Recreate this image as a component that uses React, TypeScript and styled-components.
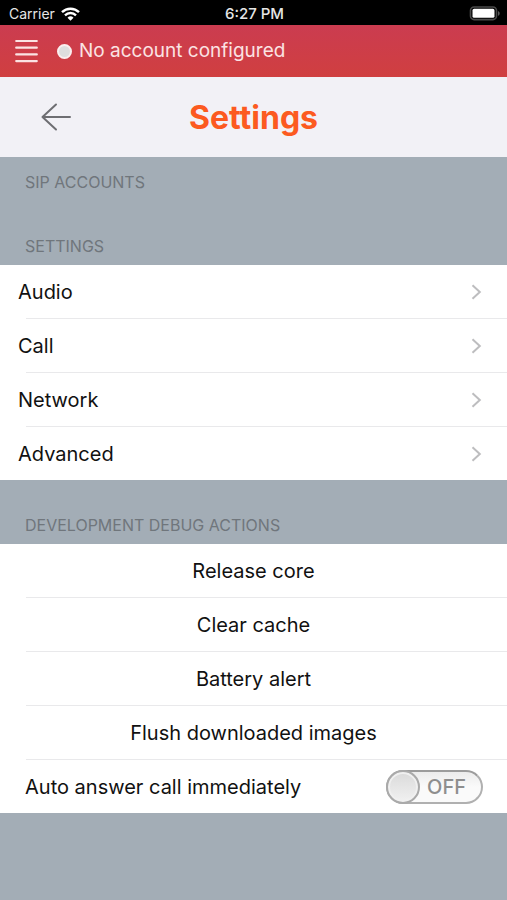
import React, { useState } from "react";
import styled, { createGlobalStyle } from "styled-components";

const GlobalStyle = createGlobalStyle`
  *, *::before, *::after { box-sizing: border-box; }
  body {
    margin: 0;
    background: #a3adb6;
    font-family: Inter, "Liberation Sans", sans-serif;
    color: #111;
  }
  button { font: inherit; color: inherit; border: 0; padding: 0; background: none; cursor: pointer; }
`;

const Screen = styled.div`
  min-height: 100vh;
  background: #a3adb6;
`;

const StatusBar = styled.div`
  display: grid;
  grid-template-columns: 1fr auto 1fr;
  align-items: center;
  height: 25px;
  padding: 2px 7px 0 9px;
  background: #000;
  color: #e6e6e6;
  font-size: 14px;
  line-height: 20px;
`;

const Carrier = styled.span`
  display: flex;
  align-items: center;
  gap: 6px;
`;

const Clock = styled.time`
  font-size: 15px;
  font-weight: 500;
`;

const BatteryIcon = styled.svg`
  justify-self: end;
`;

const AccountBar = styled.header`
  display: flex;
  align-items: center;
  height: 52px;
  padding: 0 15px;
  background: linear-gradient(#cb3c50, #d03f40);
  color: #fbe3e3;
  font-size: 19px;
  line-height: 24px;
`;

const IconButton = styled.button`
  display: flex;
`;

const StatusDot = styled.span`
  width: 15px;
  height: 15px;
  margin: 0 7px 0 19px;
  border: 2px solid #fbeeee;
  border-radius: 50%;
  background: #dedede;
`;

const TitleBar = styled.div`
  display: grid;
  grid-template-columns: 1fr auto 1fr;
  align-items: center;
  height: 80px;
  padding: 0 40px;
  background: #f2f1f6;
`;

const Title = styled.h1`
  margin: 0;
  padding-top: 2px;
  color: #fc5a20;
  font-size: 32px;
  font-weight: 700;
  line-height: 40px;
`;

const SectionTitle = styled.h2<{ $compact?: boolean }>`
  display: flex;
  align-items: flex-end;
  height: ${(p) => (p.$compact ? 44 : 64)}px;
  margin: 0;
  padding: 0 25px 9px;
  color: #70767c;
  font-size: 16px;
  font-weight: 400;
  line-height: 20px;
  text-transform: uppercase;
`;

const List = styled.ul`
  margin: 0;
  padding: 0;
  list-style: none;
  background: #fff;
  font-size: 20px;
  line-height: 24px;
`;

const Item = styled.li`
  & + &::before {
    content: "";
    display: block;
    height: 1px;
    margin-left: 26px;
    background: #e9e9eb;
  }
`;

const LinkRow = styled.button`
  display: flex;
  align-items: center;
  justify-content: space-between;
  width: 100%;
  height: 53px;
  padding: 0 25px 0 18px;
`;

const ActionRow = styled.button`
  display: block;
  width: 100%;
  height: 53px;
  text-align: center;
`;

const SwitchRow = styled.label`
  display: flex;
  align-items: center;
  justify-content: space-between;
  height: 53px;
  padding: 0 24px 0 25px;
`;

const Switch = styled.span<{ $on: boolean }>`
  position: relative;
  display: flex;
  flex-direction: ${(p) => (p.$on ? "row-reverse" : "row")};
  align-items: center;
  width: 97px;
  height: 34px;
  border: 2px solid #b0b0b0;
  border-top-color: #9c9c9c;
  border-radius: 17px;
  background: linear-gradient(#ececec, #fafafa 50%);
  color: #8e8e8e;
`;

const SwitchInput = styled.input`
  position: absolute;
  inset: 0;
  width: 100%;
  height: 100%;
  margin: 0;
  opacity: 0;
  cursor: pointer;
`;

const Knob = styled.span`
  flex: none;
  width: 34px;
  height: 34px;
  margin: 0 -2px;
  border: 2px solid #aaa;
  border-radius: 50%;
  background: linear-gradient(#dadada, #f1f1f1);
  box-shadow: inset 0 0 0 2px #f0f0f0;
`;

const SwitchText = styled.span`
  flex: 1;
  padding-right: 6px;
  text-align: center;
  font-weight: 500;
`;

const Chevron = () => (
  <svg width="11" height="16" viewBox="0 0 11 16" fill="none" stroke="#bdbdbf" strokeWidth="2" aria-hidden="true">
    <path d="M1.5 1.3 8.8 8 1.5 14.7" />
  </svg>
);

const pages = ["Audio", "Call", "Network", "Advanced"];
const actions = ["Release core", "Clear cache", "Battery alert", "Flush downloaded images"];

export default function App() {
  const [autoAnswer, setAutoAnswer] = useState(false);

  return (
    <Screen>
      <GlobalStyle />
      <StatusBar>
        <Carrier>
          Carrier
          <svg width="19" height="14" viewBox="0 0 19 14" fill="none" stroke="#fff" strokeWidth="2.4" aria-label="Wi-Fi">
            <path d="M1 5.2a12.2 12.2 0 0 1 17 0" />
            <path d="M4 8.3a7.9 7.9 0 0 1 11 0" />
            <path d="M9.5 13.8 6.5 10.7a4.3 4.3 0 0 1 6 0Z" fill="#fff" stroke="none" />
          </svg>
        </Carrier>
        <Clock>6:27 PM</Clock>
        <BatteryIcon width="31" height="15" viewBox="0 0 31 15" aria-label="Battery full">
          <rect x="1.500" y="1" width="26" height="12.6" rx="3.6" fill="#000" stroke="#4a4a4a" strokeWidth="1.6" />
          <rect x="3.500" y="2.800" width="22" height="9" rx="1.6" fill="#fff" />
          <path d="M29 5v4.800c1-.4 1.700-1.300 1.700-2.400S30 5.400 29 5Z" fill="#5a5a5a" />
        </BatteryIcon>
      </StatusBar>

      <AccountBar>
        <IconButton aria-label="Menu">
          <svg width="23" height="24" viewBox="0 0 23 24" stroke="#fbe3e3" strokeWidth="2.2" strokeLinecap="round" aria-hidden="true">
            <path d="M1.2 2h20.6M1.2 8.700h20.6M1.2 15.400h20.6M1.2 22.100h20.6" />
          </svg>
        </IconButton>
        <StatusDot />
        No account configured
      </AccountBar>

      <TitleBar>
        <IconButton aria-label="Back">
          <svg width="32" height="28" viewBox="0 0 32 28" fill="none" stroke="#6e6e72" strokeWidth="2" strokeLinecap="round" strokeLinejoin="round" aria-hidden="true">
            <path d="M16 1.5 2.5 14 16 26.5M2.5 14H30" />
          </svg>
        </IconButton>
        <Title>Settings</Title>
      </TitleBar>

      <main>
        <SectionTitle $compact>SIP accounts</SectionTitle>
        <SectionTitle>Settings</SectionTitle>
        <List>
          {pages.map((name) => (
            <Item key={name}>
              <LinkRow>
                {name}
                <Chevron />
              </LinkRow>
            </Item>
          ))}
        </List>

        <SectionTitle>Development debug actions</SectionTitle>
        <List>
          {actions.map((name) => (
            <Item key={name}>
              <ActionRow>{name}</ActionRow>
            </Item>
          ))}
          <Item>
            <SwitchRow>
              Auto answer call immediately
              <Switch $on={autoAnswer}>
                <Knob />
                <SwitchText>{autoAnswer ? "ON" : "OFF"}</SwitchText>
                <SwitchInput
                  type="checkbox"
                  role="switch"
                  aria-label="Auto answer call immediately"
                  checked={autoAnswer}
                  onChange={(e) => setAutoAnswer(e.target.checked)}
                />
              </Switch>
            </SwitchRow>
          </Item>
        </List>
      </main>
    </Screen>
  );
}
